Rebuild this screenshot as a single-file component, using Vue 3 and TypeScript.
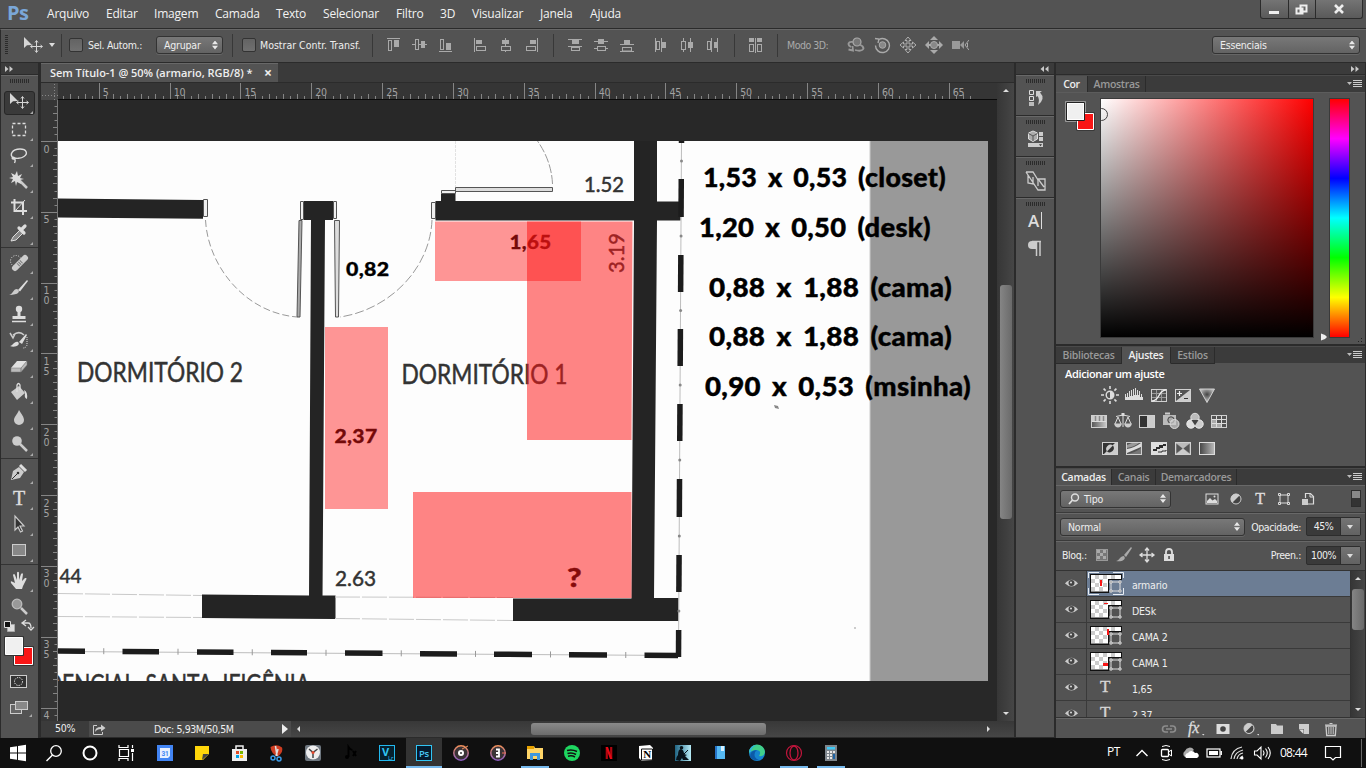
<script setup lang="ts">
interface Menu { label: string; w: number }
interface Note { t: string; x: number; y: number; w: number }
interface Layer { name: string; kind: 'shape' | 'text'; rect?: number[]; active?: boolean }

const menus: Menu[] = [
  { label: 'Arquivo', w: 59 }, { label: 'Editar', w: 48 }, { label: 'Imagem', w: 61 }, { label: 'Camada', w: 61 },
  { label: 'Texto', w: 47 }, { label: 'Selecionar', w: 73 }, { label: 'Filtro', w: 44 }, { label: '3D', w: 32 },
  { label: 'Visualizar', w: 68 }, { label: 'Janela', w: 50 }, { label: 'Ajuda', w: 50 },
]

/* 18x18 align / distribute / 3D icons of the options bar */
const bar: Record<string, string> = {
  alTop: '<path d="M2 2.500h13" stroke="#aaa"/><rect x="3.500" y="4.500" width="3" height="10" fill="none" stroke="#aaa"/><rect x="9" y="4" width="5" height="7" fill="#aaa"/>',
  alMid: '<path d="M1 8.500h15" stroke="#aaa"/><rect x="4.500" y="3.500" width="3" height="10" fill="#535353" stroke="#aaa"/><rect x="10" y="5" width="4" height="7" fill="#aaa"/>',
  alBot: '<path d="M2 15.500h13" stroke="#aaa"/><rect x="3.500" y="3.500" width="3" height="10" fill="none" stroke="#aaa"/><rect x="9" y="7" width="5" height="7" fill="#aaa"/>',
  alL: '<path d="M3.500 2v14" stroke="#aaa"/><rect x="5" y="4" width="6" height="4" fill="#aaa"/><rect x="5.500" y="10.500" width="9" height="4" fill="none" stroke="#aaa"/>',
  alC: '<path d="M8.500 2v14" stroke="#aaa"/><rect x="5" y="4" width="7" height="4" fill="#aaa"/><rect x="4.500" y="10.500" width="9" height="4" fill="#535353" stroke="#aaa"/>',
  alR: '<path d="M14.500 2v14" stroke="#aaa"/><rect x="7" y="4" width="6" height="4" fill="#aaa"/><rect x="3.500" y="10.500" width="9" height="4" fill="none" stroke="#aaa"/>',
  dTop: '<path d="M2 3.500h14M2 10.500h14" stroke="#aaa"/><rect x="6" y="4" width="7" height="4" fill="#aaa"/><rect x="5.500" y="11.500" width="8" height="3" fill="#535353" stroke="#aaa"/>',
  dMid: '<path d="M2 5.500h14M2 12.500h14" stroke="#aaa"/><rect x="6" y="3" width="6" height="5" fill="#aaa"/><rect x="5.500" y="10.500" width="8" height="4" fill="#535353" stroke="#aaa"/>',
  dBot: '<path d="M2 8.500h14M2 15.500h14" stroke="#aaa"/><rect x="6" y="4" width="6" height="4" fill="#aaa"/><rect x="4.500" y="11.500" width="9" height="3.500" fill="#535353" stroke="#aaa"/>',
  dL: '<path d="M3.500 2v14M9.500 2v14" stroke="#aaa"/><rect x="4.500" y="5.500" width="3" height="8" fill="none" stroke="#aaa"/><rect x="10" y="6" width="4" height="6" fill="#aaa"/>',
  dC: '<path d="M5.500 2v14M12.500 2v14" stroke="#aaa"/><rect x="3.500" y="5.500" width="4" height="8" fill="#535353" stroke="#aaa"/><rect x="10" y="6" width="5" height="6" fill="#aaa"/>',
  dR: '<path d="M7.500 2v14M13.500 2v14" stroke="#aaa"/><rect x="3.500" y="5.500" width="3" height="8" fill="none" stroke="#aaa"/><rect x="10" y="6" width="4" height="6" fill="#aaa"/>',
  auto: '<path d="M8.500 2v15" stroke="#aaa"/><rect x="2" y="2" width="5" height="4" fill="#aaa"/><rect x="10" y="2" width="5" height="4" fill="#aaa"/><rect x="2.500" y="8.500" width="4" height="7" fill="none" stroke="#aaa"/><rect x="10.500" y="8.500" width="4" height="7" fill="none" stroke="#aaa"/>',
  orbit: '<circle cx="10" cy="6" r="4" fill="#777" stroke="#aaa" stroke-width="1.200"/><path d="M6 6C1 5 0 9 4 11M1.500 13.500l4.500 1-.5-4.500M8 14q7 2 8.500-1.500 0-2.500-4-4" fill="none" stroke="#999" stroke-width="1.800"/>',
  roll: '<circle cx="9.500" cy="9" r="3.300" fill="#888" stroke="#aaa"/><path d="M6 3.500a7 7 0 1 1-3.500 6M2 2.500l4 .5-1 4" fill="none" stroke="#aaa" stroke-width="1.400"/>',
  pan: '<path d="M9 1l3 3.500h-2v3.500h3.500V6L17 9l-3.500 3v-2H10v3.500h2L9 17l-3-3.500h2V10H4.500v2L1 9l3.500-3v2H8V4.500H6z" fill="#535353" stroke="#b0b0b0"/>',
  slide: '<path d="M9 0l4 4H5zM9 18l4-4H5zM0 9l4-4v8zM18 9l-4-4v8z" fill="#aaa"/><circle cx="9" cy="9" r="3.500" fill="#888" stroke="#aaa"/><path d="M2 9h4M12 9h4" stroke="#aaa" stroke-width="2"/>',
  cam: '<rect x="1" y="5" width="8" height="8" fill="#999"/><path d="M9 9l4-4v8z" fill="#999"/><path d="M18 4l-4 5 4 5M16.500 7v4" fill="none" stroke="#aaa"/>',
}
const alignGroups: string[][] = [['alTop', 'alMid', 'alBot'], ['alL', 'alC', 'alR']]
const distGroups: string[][] = [['dTop', 'dMid', 'dBot'], ['dL', 'dC', 'dR']]
const modes3d = ['orbit', 'roll', 'pan', 'slide', 'cam']

/* 24x24 tool icons */
const moveGlyph = '<path d="M1 4v11l3-2.800 5-.2z" fill="#d6d6d6"/><path d="M13.500 8v11M8 13.500h11M12 9.500l1.500-2 1.500 2M12 17.500l1.500 2 1.500-2M9.500 12l-2 1.500 2 1.500M17.500 12l2 1.500-2 1.500" fill="none" stroke="#d6d6d6"/>'
const tools: Record<string, string> = {
  move: '<g transform="translate(2 -1)">' + moveGlyph + '</g>',
  marquee: '<rect x="5.500" y="6.500" width="13" height="12" fill="none" stroke="#ddd" stroke-width="1.300" stroke-dasharray="3 2"/>',
  lasso: '<path d="M6.500 15C2 12 5 6 13 6c7 0 8 5 4 7.500-3 2-8 2.500-10 1-2-1-2.500 2-.5 1.500s2 2 1 4" fill="none" stroke="#ddd" stroke-width="1.400"/>',
  wand: '<path d="M12 11l8 8" stroke="#ccc" stroke-width="2.500"/><path d="M10 2l1 5 4-2-2 4 4 1-4 1 1 4-4-2-1 4-1-5-4 2 2-4-4-1 4-1-2-4 4 2z" fill="#ddd"/>',
  crop: '<path d="M7.500 4v12H20M4 7.500h12V20" fill="none" stroke="#ddd" stroke-width="2"/><path d="M9 15l9-10" stroke="#ddd"/>',
  dropper: '<path d="M4 20l2-4 7-7 3 3-7 7z" fill="#888" stroke="#ddd"/><path d="M12 7l5 5M14 9l4-4" stroke="#ddd" stroke-width="3.200" stroke-linecap="round"/>',
  heal: '<circle cx="9" cy="11" r="5.500" fill="none" stroke="#ddd" stroke-dasharray="1 1.500"/><path d="M8 18l10-10" stroke="#ccc" stroke-width="6" stroke-linecap="round"/><path d="M11 15l4-4" stroke="#777" stroke-width="4" stroke-dasharray="1 1"/>',
  brush: '<path d="M11 14l9-10 1 1-8 10.500z" fill="#ddd"/><path d="M2 19c4-1 4-6 8-6 4 2 2 6-8 6z" fill="#ccc"/>',
  stamp: '<circle cx="12" cy="7" r="3.200" fill="#ddd"/><path d="M10.500 9h3v5h5v3h-13v-3h5z" fill="#ddd"/><path d="M5 19.500h14" stroke="#ddd" stroke-width="1.500"/>',
  history: '<path d="M3 5l3 5 2-4M6 7c4-3 8-3 11 0" fill="none" stroke="#ccc" stroke-width="1.500"/><path d="M12 14l7-8 1 1-5 9zM3 18c3 0 4-5 8-4 3 3-3 6-8 4z" fill="#ddd"/><path d="M20 9v8q-1 3-4 3" fill="none" stroke="#ddd" stroke-dasharray="1 1"/>',
  eraser: '<path d="M4 14l6-7h10l-6 7z" fill="#e2e2e2"/><path d="M4 14h10v4H4zM14 14l6-7v4l-6 7z" fill="#bbb" stroke="#777" stroke-width=".5"/>',
  bucket: '<path d="M4 12l8-6 6 7-8 7z" fill="#ccc"/><path d="M10 12V5q1.500-3 3 0v5" fill="none" stroke="#ddd" stroke-width="1.300"/><path d="M17 10q4 2 3 9-3-1-2-5z" fill="#ddd"/>',
  blur: '<path d="M12 4c3 5 5 7 5 10a5 5 0 0 1-10 0c0-3 3-5 5-10z" fill="#ccc"/>',
  dodge: '<circle cx="10" cy="9" r="4.800" fill="#ccc"/><path d="M13 12l7 7" stroke="#ccc" stroke-width="2.500"/>',
  pen: '<path d="M4 20l2-9 6-4 5 5-4 6z" fill="#ccc"/><path d="M5 19l5-5" stroke="#333"/><circle cx="11" cy="13" r="1.300" fill="#333"/><path d="M13 5l6 6" stroke="#ddd" stroke-width="3"/>',
  type: '<text x="12" y="18.500" text-anchor="middle" font-family="Liberation Serif, serif" font-size="20" font-weight="400" fill="#ddd" stroke="#ddd" stroke-width=".4">T</text>',
  path: '<path d="M8 4v14l3-3 2.500 5 2-1-2.500-5h4z" fill="#333" stroke="#ccc" stroke-width="1.200"/>',
  rect: '<rect x="5.500" y="6.500" width="13" height="11" fill="#888" stroke="#ccc"/>',
  hand: '<path d="M9 21L4 15q-1-3 2-1l2 1-2-8q1-2 2 0l2 5V4.500q1-1.500 2 0V12l2-6q1.500-1.500 2 0l-1 7 3-3q2-.5 1.500 1L16 18l-1 3z" fill="#ddd"/>',
  zoom: '<circle cx="10" cy="10" r="4.800" fill="#999" stroke="#bbb" stroke-width="1.300"/><path d="M14 14l6 6" stroke="#ccc" stroke-width="2.500"/>',
}
const toolGroups: string[][] = [
  ['move', 'marquee', 'lasso', 'wand', 'crop', 'dropper'],
  ['heal', 'brush', 'stamp', 'history', 'eraser', 'bucket', 'blur', 'dodge'],
  ['pen', 'type', 'path', 'rect'],
  ['hand', 'zoom'],
]

/* 18x18 dock + panel icons */
const frame = '<rect x="1.500" y="3.500" width="15" height="12" fill="none" stroke="#d0d0d0"/>'
const ico: Record<string, string> = {
  bright: '<circle cx="9" cy="9" r="3.800" fill="none" stroke="#ddd" stroke-width="1.400"/><path d="M9 5.500a3.500 3.500 0 0 1 0 7z" fill="#ddd"/><path d="M9 0v3M9 15v3M0 9h3M15 9h3M2.600 2.600l2 2M13.400 13.400l2 2M2.600 15.400l2-2M13.400 4.600l2-2" stroke="#ddd" stroke-width="1.600"/>',
  levels: '<path d="M0 14V8h1v3h1V7h1v4h1V5h1v5h1V4h1v6h1V3h1v6h1V2h1v7h1V4h1v5h1V5h1v6h1V8h1v3h1v3z" fill="#ddd"/>',
  curves: frame + '<path d="M2 7.500h14M2 11.500h14M6.500 4v11M11.500 4v11" stroke="#999"/><path d="M2 15c8 0 6-11 14-11" fill="none" stroke="#eee" stroke-width="1.400"/>',
  expo: frame + '<path d="M2 15L16 4v11z" fill="#ccc"/><path d="M3 7.500h5M5.500 5v5" stroke="#eee" stroke-width="1.200"/><path d="M10 12.500h4" stroke="#333"/>',
  vib: '<path d="M1.500 3h15L9 16.500z" fill="url(#vg)" stroke="#d0d0d0"/><defs><radialGradient id="vg" cx=".5" cy=".4"><stop offset="0" stop-color="#444"/><stop offset="1" stop-color="#bbb"/></radialGradient></defs>',
  hue: '<rect x="1.500" y="3.500" width="15" height="12" fill="url(#hg)" stroke="#d0d0d0"/><defs><linearGradient id="hg"><stop offset="0" stop-color="#555"/><stop offset="1" stop-color="#ccc"/></linearGradient></defs><rect x="2" y="4" width="14" height="5" fill="#ccc"/><path d="M5.500 4v5M9.500 4v5M13.500 4v5" stroke="#888" stroke-width="1.500"/><path d="M2 9.500h14" stroke="#ddd"/>',
  balance: '<path d="M9 2v13M2 4.500q7-3 14 0M4 5l-3 7M4 5l3 7M14 5l-3 7M14 5l3 7" fill="none" stroke="#ddd"/><path d="M0 11.500h8q-1 4-4 4t-4-4M10 11.500h8q-1 4-4 4t-4-4" fill="#ccc"/><rect x="7.500" y="1" width="3" height="3" fill="#ddd"/>',
  bw: frame + '<rect x="2" y="4" width="7" height="11" fill="#333"/><rect x="9" y="4" width="7" height="11" fill="#ccc"/>',
  photo: '<rect x="1" y="3" width="13" height="10" fill="#bbb"/><path d="M3 1.500h5" stroke="#ccc" stroke-width="2"/><circle cx="9" cy="8" r="3.200" fill="#aaa" stroke="#444"/><circle cx="12.500" cy="12" r="4.500" fill="#ccc" fill-opacity=".7" stroke="#ddd"/>',
  mixer: '<circle cx="9" cy="5.500" r="4.200" fill="#bbb" stroke="#ddd"/><circle cx="5" cy="12" r="4.200" fill="#ddd" stroke="#eee"/><circle cx="13" cy="12" r="4.200" fill="#ccc" stroke="#eee"/><path d="M9 13.500L5.500 8h7z" fill="#444"/>',
  lut: frame + '<path d="M2 7.500h14M2 11.500h14M6.500 4v11M11.500 4v11" stroke="#ddd"/><path d="M2 8h4v3H2zM2 12h4v3H2zM7 12h4v3H7z" fill="#aaa"/>',
  invert: frame + '<path d="M2 4h12L3 15H2z" fill="#333"/><path d="M14 4h2v11H3z" fill="#ccc"/><path d="M6 12.500a4.300 4.300 0 0 1 6-6z" fill="#ccc"/><path d="M12 6.500a4.300 4.300 0 0 1-6 6z" fill="#333"/>',
  poster: frame + '<path d="M2 10q7-1 14-6v4Q9 11 2 14z" fill="#ddd"/><path d="M2 6l5-2h7Q9 8 2 9z" fill="#999"/><path d="M2 15q8-1 14-6v6z" fill="#777"/>',
  thresh: '<rect x="1.500" y="3.500" width="15" height="12" fill="#ddd" stroke="#ddd"/><path d="M3 10h3V8h3V6h4V5h3v2h-3v2h-3v1H7v2H3z" fill="#2c2c2c"/><path d="M8 13h4v-1h4v-1" fill="none" stroke="#2c2c2c"/>',
  selcol: frame + '<path d="M2 4h14L9 9.500z" fill="#bbb"/><path d="M2 15h14L9 9.500z" fill="#ccc"/><path d="M2 4v11l7-5.500zM16 4v11L9 9.500z" fill="#555" stroke="#ddd" stroke-width=".5"/>',
  gmap: '<rect x="1.500" y="3.500" width="15" height="12" fill="url(#gm)" stroke="#ddd"/><defs><linearGradient id="gm"><stop offset="0" stop-color="#444"/><stop offset="1" stop-color="#bbb"/></linearGradient></defs>',
  fImg: '<rect x="3" y="4" width="12" height="10" fill="#555" stroke="#ddd"/><path d="M4 13V11l3-3 2.500 2.500L12 9l2 2v2z" fill="#ddd"/><circle cx="11.500" cy="6.500" r="1" fill="#ddd"/>',
  fAdj: '<circle cx="9" cy="9" r="5.300" fill="#ccc"/><path d="M5 13L13 5A5.500 5.500 0 0 1 5 13z" fill="#444"/><circle cx="9" cy="9" r="5" fill="none" stroke="#ccc"/>',
  fText: '<text x="9" y="14" text-anchor="middle" font-family="Liberation Serif, serif" font-size="16" fill="#ddd" stroke="#ddd" stroke-width=".4">T</text>',
  fShape: '<rect x="5" y="5" width="8" height="8" fill="none" stroke="#ddd"/><path d="M3.500 3.500h2v2h-2zM12.500 3.500h2v2h-2zM3.500 12.500h2v2h-2zM12.500 12.500h2v2h-2z" fill="#555" stroke="#ddd"/>',
  fSmart: '<path d="M6.500 8V3.500h5l3 3V14H9" fill="none" stroke="#ddd" stroke-width="1.200"/><path d="M11 4v3h3" fill="none" stroke="#ddd"/><rect x="3" y="9" width="6" height="6" fill="#ccc"/>',
  lPix: '<rect x="3.500" y="3.500" width="11" height="11" fill="#777" stroke="#999"/><path d="M4 4h3v3H4zM10 4h3v3h-3zM7 7h3v3H7zM4 10h3v3H4zM10 10h3v3h-3z" fill="#aaa"/>',
  lBrush: '<path d="M9 9l7-8 1 1-6 9z" fill="#aaa"/><path d="M1 15c3 0 4-5 8-5 3 4-3 6-8 5z" fill="#aaa"/>',
  lMove: '<path d="M9 2.500v13M2.500 9h13M7 4.500L9 2l2 2.500M7 13.500L9 16l2-2.500M4.500 7L2 9l2.500 2M13.500 7L16 9l-2.500 2" fill="none" stroke="#ddd" stroke-width="1.300"/>',
  lock: '<rect x="4" y="8" width="10" height="7" fill="#ddd"/><path d="M6 8V6a3 3 0 0 1 6 0v2" fill="none" stroke="#ddd" stroke-width="1.800"/><rect x="8.300" y="10" width="1.500" height="3" fill="#444"/>',
  link: '<path d="M8 6H5.500a3 3 0 0 0 0 6H8M10 6h2.500a3 3 0 0 1 0 6H10M6 9h6" fill="none" stroke="#8d8d8d" stroke-width="1.600"/>',
  fx: '<text x="1" y="13" font-family="Liberation Serif, serif" font-style="italic" font-size="16" fill="#ddd" stroke="#ddd" stroke-width=".3">fx</text><path d="M15 14h2.500l-1.200 1.500z" fill="#ddd"/>',
  mask: '<rect x="2.500" y="4" width="13" height="10" fill="#ddd"/><circle cx="9" cy="9" r="2.800" fill="#444"/>',
  adj: '<circle cx="8" cy="8.500" r="5" fill="#ccc"/><path d="M4.500 12L11.500 5A5 5 0 0 1 4.500 12z" fill="#444"/><circle cx="8" cy="8.500" r="5" fill="none" stroke="#ccc"/><path d="M16 14h2.500l-1.200 1.500z" fill="#ddd"/>',
  folder: '<path d="M3 14V4h5l1 1.500h6V14z" fill="#ccc"/>',
  newl: '<path d="M4 4h10v10H9V9H4z" fill="#ccc"/><path d="M4 9.500h4.500V14z" fill="#ddd"/>',
  trash: '<path d="M4 6h10l-.7 9.500H4.700z" fill="none" stroke="#ccc" stroke-width="1.300"/><path d="M3 5h12M7.500 3.500h3M6.800 7v7M9 7v7M11.200 7v7" stroke="#ccc"/>',
}
const adjRows: string[][] = [
  ['bright', 'levels', 'curves', 'expo', 'vib'],
  ['hue', 'balance', 'bw', 'photo', 'mixer', 'lut'],
  ['invert', 'poster', 'thresh', 'selcol', 'gmap'],
]
const filters = ['fImg', 'fAdj', 'fText', 'fShape', 'fSmart']
const locks = ['lPix', 'lBrush', 'lMove', 'lock']
const footer = ['link', 'fx', 'mask', 'adj', 'folder', 'newl', 'trash']
const dock: string[][] = [
  ['<path d="M5.500 1.500h4v4h-4zM5.500 7.500h4v4h-4z" fill="none" stroke="#ddd"/><rect x="5" y="13" width="5" height="4" fill="#bbb"/><path d="M12 2h6l-2 1.500q6 6-2 12.500 2-6-.5-9l-1.500 1z" fill="#ccc"/>'],
  ['<path d="M9 1l4.500 2v6L9 11.500 4.500 9V3z" fill="#aaa" stroke="#ddd"/><path d="M4.500 3.500L9 6l4.500-2.500M9 6v5" fill="none" stroke="#555"/><path d="M15 2h4v4h-4zM15 7h4v4h-4z" fill="#ccc"/><rect x="4" y="13" width="15" height="4" fill="#ccc"/><path d="M15 14.300h3l-1.500 2z" fill="#333"/>'],
  ['<path d="M2 1h7l5 8M2 1l12 18h7V8h-7l6 8M4 4v8l5 1V6" fill="none" stroke="#ccc" stroke-width="1.300"/><path d="M14 8v7" stroke="#ccc" stroke-width="1.300"/>'],
  [
    '<text x="4" y="15" font-family="Open Sans, sans-serif" font-size="17" font-weight="600" fill="#ddd">A</text><path d="M17.500 0v17" stroke="#ddd"/>',
    '<path d="M12.500 2v15M16 2v15M8 2.500h9" stroke="#ccc" stroke-width="1.500"/><path d="M12.500 2H8a4 4 0 0 0 0 8h4.500z" fill="#ccc"/>',
  ],
]

const layers: Layer[] = [
  { name: 'armario', kind: 'shape', rect: [10, 7, 2, 6], active: true },
  { name: 'DESk', kind: 'shape', rect: [14, 4, 4, 1] },
  { name: 'CAMA 2', kind: 'shape', rect: [17, 4, 2, 6] },
  { name: 'CAMA 1', kind: 'shape', rect: [13, 12, 5, 3] },
  { name: '1,65', kind: 'text' },
  { name: '2,37', kind: 'text' },
]

const hTicks = Array.from({ length: 134 }, (_, i) => ({ x: 28.5 + i * 7.083 - 58, n: i, big: i % 10 === 0, v: i / 2 })).filter((t) => t.x > 0 && t.x < 938)
const vTicks = Array.from({ length: 88 }, (_, i) => ({ y: 141.5 - 5 * 7.083 + i * 7.083, n: i - 5 })).filter((t) => t.y > 100 && t.y < 720)
const digits = (n: number): string[] => (n === 80 ? ['4'] : String(n / 2).split(''))

const notes: Note[] = [
  { t: '1,53 x 0,53 (closet)', x: 703, y: 187, w: 243 },
  { t: '1,20 x 0,50 (desk)', x: 699, y: 237, w: 232 },
  { t: '0,88 x 1,88 (cama)', x: 709, y: 297, w: 243 },
  { t: '0,88 x 1,88 (cama)', x: 709, y: 346, w: 243 },
  { t: '0,90 x 0,53 (msinha)', x: 705, y: 396, w: 266 },
]
const sideDashes: number[][] = [[141, 143], [179, 217], [255, 292], [329, 366], [404, 441], [479, 517], [555, 592], [630, 657]]
const footDashes: number[][] = [[58, 85], [122.5, 159], [197, 233.5], [271, 307], [345, 382.5], [420, 457], [494, 532], [569, 607], [644.5, 678]]
const sideX = (y: number): number => 681.5 - ((y - 141) / 516) * 3
const footY = (x: number): number => 651 + ((x - 58) / 620) * 4.5

/* 18x18 taskbar icons */
const disc = (inner: string): string => '<circle cx="9" cy="9" r="7.200" fill="#3a3336" stroke="url(#dg)" stroke-width="1.500"/><defs><linearGradient id="dg" x1="0" y1="0" x2="0" y2="1"><stop offset="0" stop-color="#f0905a"/><stop offset="1" stop-color="#8a5bc0"/></linearGradient></defs>' + inner
const sys: string[] = [
  '<path d="M1 3.200l7-1v6.300H1zM9 2l8-1.200v7.700H9zM1 9.500h7v6.300l-7-1zM9 9.500h8v7.700L9 16z" fill="#fff"/>',
  '<circle cx="11" cy="7" r="5.300" fill="none" stroke="#fff" stroke-width="1.300"/><path d="M7.500 11L1.500 17" stroke="#fff" stroke-width="1.500"/>',
  '<circle cx="9" cy="9" r="6.500" fill="none" stroke="#fff" stroke-width="2"/>',
  '<path d="M2 1v2.500h9V1M2 17v-2.500h9V17M2.500 5.500h9v7h-9zM15.500 1v3M15.500 9v8" fill="none" stroke="#fff" stroke-width="1.200"/><path d="M14 5h3v3h-3z" fill="#fff"/>',
]
const apps: { g: string; on?: boolean; active?: boolean }[] = [
  { g: '<rect x="1" y="1" width="16" height="16" fill="#4285f4"/><path d="M4 4h10v8l-2 2H4z" fill="#e8f0fe"/><text x="9" y="11.500" text-anchor="middle" font-family="Roboto, sans-serif" font-size="6.500" font-weight="700" fill="#4285f4">31</text>' },
  { g: '<path d="M2 2h14v8l-6 6H2z" fill="#ffd60a"/><path d="M9 16l1-6h6z" fill="#454545"/>' },
  { g: '<path d="M6 5V2h7v3" fill="none" stroke="#eee" stroke-width="1.500"/><path d="M2 5h15v12H2z" fill="#eee"/><path d="M6 7h3v3H6z" fill="#e34c26"/><path d="M10 7h3v3h-3z" fill="#7ab800"/><path d="M6 11h3v3H6z" fill="#00a2e8"/><path d="M10 11h3v3h-3z" fill="#fbb900"/>' },
  { g: '<path d="M3.500 3q6-3.500 11.500.5 1.500 5-4.500 9-6.500-3-7-9.500z" fill="#cf3d21"/><path d="M8.500 2l1.500 10M11 5l-2 7" stroke="#ddd" stroke-width="1.600"/><circle cx="6" cy="14" r="2" fill="none" stroke="#3b9be8" stroke-width="1.500"/><circle cx="12" cy="15" r="2" fill="none" stroke="#3b9be8" stroke-width="1.500"/>' },
  { g: '<rect x="1" y="1" width="16" height="16" rx="2" fill="#6e7780"/><circle cx="9" cy="8.500" r="7" fill="#eee"/><path d="M5 5l4 3.500L13.500 5M9 9v5" fill="none" stroke="#444" stroke-width="1.500"/><circle cx="9" cy="8.500" r="1.500" fill="#e64a2e"/>' },
  { g: '<circle cx="6" cy="13" r="2" fill="#000"/><path d="M7.500 13V3q2 3 4 3M12 7l3 5M15 7l-3 5" fill="none" stroke="#000" stroke-width="2"/>' },
  { g: '<rect x="1.500" y="1.500" width="15" height="15" fill="#06202e" stroke="#22b8ee"/><text x="4" y="12" font-family="Open Sans, sans-serif" font-size="11" font-weight="700" fill="#31c5f4">V</text><text x="10" y="15.500" font-family="Open Sans, sans-serif" font-size="6" fill="#31c5f4">Lr</text>' },
  { g: '<rect x="1.500" y="1.500" width="15" height="15" fill="#051a2d" stroke="#31c5f4"/><text x="9" y="12.500" text-anchor="middle" font-family="Open Sans, sans-serif" font-size="9.500" font-weight="600" fill="#48c8f5">Ps</text>', active: true, on: true },
  { g: disc('<circle cx="9" cy="9" r="3" fill="#fff"/><circle cx="9" cy="9" r="1" fill="#333"/><path d="M10 5l6-3" stroke="#f0905a"/>') },
  { g: disc('<path d="M7 5.500h3v7H7M7 9h3" fill="none" stroke="#fff" stroke-width="1.800"/><path d="M13 9h4" stroke="#f0705a"/>') },
  { g: '<path d="M1 2h7l1 2h8v11H1z" fill="#ffd567"/><path d="M1 2h7v3H1z" fill="#e6a100"/><path d="M4 9h10v7h-3v-4H7v4H4z" fill="#3f97dd"/>', on: true },
  { g: '<circle cx="9" cy="9" r="8" fill="#1ed760"/><path d="M4 6.500q5-1.500 10 1M4.500 9.500q4.500-1.500 8.500 1M5 12.200q4-1 7 .8" fill="none" stroke="#111" stroke-width="1.500"/>' },
  { g: '<rect x="1" y="1" width="16" height="16" fill="#000"/><path d="M6.800 3v12M11.200 3v12" stroke="#b1060f" stroke-width="2.200"/><path d="M5.700 3h2.300l4.300 12H10z" fill="#e50914"/>' },
  { g: '<path d="M2 2l11-1 3 3v12l-11 1-3-3z" fill="#fff"/><path d="M4.500 5h11v11h-11z" fill="#fff" stroke="#111"/><text x="10" y="14.300" text-anchor="middle" font-family="Liberation Serif, serif" font-weight="700" font-size="11" fill="#000">N</text>' },
  { g: '<rect x="1" y="1" width="16" height="16" fill="url(#kg)"/><defs><linearGradient id="kg"><stop offset="0" stop-color="#1f6483"/><stop offset="1" stop-color="#b7ecf7"/></linearGradient></defs><circle cx="7.500" cy="3.800" r="1.800" fill="#06121a"/><path d="M2 16q0-3 2-5 0-6 3-6 3 1 3 5l3 1-2 1 4 4H9l-1-2-2 3z" fill="#06121a"/><path d="M10 10l4-4" stroke="#06121a"/>' },
  { g: '<rect x="4" y="2" width="10" height="13" fill="#55b9f3"/><rect x="4" y="2" width="2" height="13" fill="#2673c7"/><path d="M10 2h3v5h-3z" fill="#d7f0ff"/>' },
  { g: '<circle cx="9" cy="9" r="8" fill="#1584cf"/><path d="M1 9a8 8 0 0 1 16-1q-1 5-6 4 3-5-2-6-5 0-8 3z" fill="#41d08a"/><path d="M1 8q1-7 8-7Q3 3 3 8z" fill="#2bb3e0"/><path d="M7 8q-2 6 4 8-6 1-9-3Q2 6 9 6z" fill="#0c5aa8"/>' },
  { g: '<circle cx="9" cy="9" r="7.500" fill="none" stroke="#c3153c" stroke-width="1.200"/><ellipse cx="9" cy="9" rx="4" ry="7" fill="none" stroke="#c3153c" stroke-width="1.300"/>', on: true },
  { g: '<rect x="3" y="1" width="12" height="16" fill="#7d858c"/><rect x="5" y="3" width="8" height="2.500" fill="#3fc8f5"/><path d="M5 7h2v2H5zM8 7h2v2H8zM11 7h2v2h-2zM5 10h2v2H5zM8 10h2v2H8zM5 13h2v2H5zM8 13h2v2H8z" fill="#e8e8e8"/><path d="M11 10h2v5h-2z" fill="#1d63a5"/>', on: true },
]
const tray: string[] = [
  '<path d="M3.500 12L9 6.500l5.500 5.500" fill="none" stroke="#fff" stroke-width="1.400"/>',
  '<rect x="4.500" y="5.500" width="7" height="7" rx="1" fill="none" stroke="#fff" stroke-width="1.300"/><path d="M11.500 8l3-2v6l-3-2M5 2.500q4-2 8 0M5 15.500q4 2 8 0" fill="none" stroke="#fff"/>',
  '<path d="M4 13a3.500 3.500 0 0 1 0-6 5 5 0 0 1 9-1z" fill="#aaa"/><path d="M5 14a3 3 0 0 1 2-5 4 4 0 0 1 7 0 2.600 2.600 0 0 1 2 5z" fill="#fff"/>',
  '<rect x="2" y="5" width="13" height="8" fill="none" stroke="#fff" stroke-width="1.200"/><rect x="4" y="7" width="9" height="4" fill="#fff"/><path d="M16.200 7v4" stroke="#fff" stroke-width="1.500"/>',
  '<path d="M2 15Q3 5 13 3M5 15q1-7 9-9M8 15q1-5 6-6M11 15q0-2 3-3" fill="none" stroke="#ddd" stroke-width="1.200"/><circle cx="13" cy="14" r="1.500" fill="#fff"/>',
  '<path d="M1.500 7h2.500l4-4v12l-4-4H1.500zM10 6.500q2 2.500 0 5M12.500 4.500q3.500 4.500 0 9M15 3q4.500 6 0 12" fill="none" stroke="#fff" stroke-width="1.100"/>',
]
</script>

<template>
  <div class="app">
    <header class="menubar">
      <span class="logo">Ps</span>
      <nav class="menus">
        <span v-for="m in menus" :key="m.label" :style="{ width: m.w + 'px' }">{{ m.label }}</span>
      </nav>
      <div class="win">
        <span><svg width="27" height="18"><path d="M8 11h10v3H8z" fill="#eee" /></svg></span>
        <span><svg width="26" height="18"><path d="M11.500 5.500h6v6h-6zM7.500 8.500h6v5h-6z" fill="#666" stroke="#eee" stroke-width="2" /></svg></span>
        <span><svg width="46" height="18"><path d="M19 5l8 8M27 5l-8 8" stroke="#eee" stroke-width="2.600" /></svg></span>
      </div>
    </header>

    <div class="options">
      <i class="vgrip"></i>
      <svg class="mv" width="21" height="22" viewBox="0 0 21 22" v-html="moveGlyph"></svg>
      <i class="caret"></i>
      <i class="sep s1"></i>
      <i class="check"></i><span class="ol sel">Sel. Autom.:</span>
      <div class="select agr"><span>Agrupar</span><i class="updn"></i></div>
      <i class="sep s2"></i>
      <i class="check"></i><span class="ol most">Mostrar Contr. Transf.</span>
      <i class="sep s3"></i>
      <div v-for="(g, i) in alignGroups" :key="'a' + i" class="grp">
        <svg v-for="k in g" :key="k" width="18" height="18" v-html="bar[k]"></svg>
      </div>
      <i class="sep"></i>
      <div v-for="(g, i) in distGroups" :key="'d' + i" class="grp">
        <svg v-for="k in g" :key="k" width="18" height="18" v-html="bar[k]"></svg>
      </div>
      <i class="sep"></i>
      <div class="grp"><svg width="18" height="18" v-html="bar.auto"></svg></div>
      <i class="sep"></i>
      <span class="ol modo">Modo 3D:</span>
      <div class="grp m3"><svg v-for="k in modes3d" :key="k" width="18" height="18" v-html="bar[k]"></svg></div>
      <div class="select ess"><span>Essenciais</span><i class="updn"></i></div>
    </div>

    <main class="main">
      <aside class="toolcol">
        <div class="strip"><svg width="10" height="6"><path d="M0 0l3.500 3L0 6zM4.500 0L8 3 4.500 6z" fill="#c8c8c8" /></svg></div>
        <div class="tools">
          <i class="hgrip"></i>
          <div v-for="(g, gi) in toolGroups" :key="gi" class="tgrp">
            <div v-for="k in g" :key="k" class="tool" :class="{ on: k === 'move' }">
              <svg width="24" height="24" v-html="tools[k]"></svg>
              <i v-if="k !== 'zoom'" class="corner"></i>
            </div>
          </div>
          <svg class="swatches" width="36" height="100" viewBox="0 0 36 100">
            <path d="M6.500 6.500h7v7h-7z" fill="#ddd" stroke="#aaa" /><path d="M3.500 3.500h6v6h-6z" fill="#111" stroke="#ddd" />
            <path d="M22 5h5q3 0 3 5M25 2l-4 3 4 3M27 9l3 3 3-3" fill="none" stroke="#ddd" stroke-width="1.300" />
            <path d="M13.500 29.500h18v17h-18z" fill="#f91616" stroke="#fff" /><path d="M12.500 28.500h20v19h-20z" fill="none" stroke="#333" />
            <path d="M4.500 19.500h17v17h-17z" fill="#f0f0f0" stroke="#fff" /><path d="M3.500 18.500h19v19h-19z" fill="none" stroke="#333" />
            <rect x="9.500" y="57.500" width="16" height="12" fill="#333" stroke="#ccc" /><circle cx="17.500" cy="63.500" r="4" fill="#333" stroke="#fff" stroke-dasharray="1.200 1.200" />
            <rect x="9.500" y="86.500" width="11" height="9" fill="#666" stroke="#ccc" /><rect x="14.500" y="83.500" width="12" height="8" fill="#888" stroke="#ccc" /><path d="M28 99l3-3v3z" fill="#aaa" />
          </svg>
        </div>
      </aside>

      <section class="doc">
        <div class="tabs"><div class="tab"><span>Sem Título-1 @ 50% (armario, RGB/8) *</span><b>×</b></div></div>
        <div class="stage">
          <svg class="corner-r" width="17" height="17"><rect width="17" height="17" fill="#4a4a4a" /><path d="M1 12.500h16M13.500 1v16" stroke="#888" stroke-dasharray="1 2" /></svg>
          <svg class="hr" width="939" height="17">
            <rect width="939" height="17" fill="#353535" />
            <g v-for="t in hTicks" :key="t.n">
              <path :d="`M${Math.floor(t.x) + 0.5} ${t.big ? 0 : t.n % 2 ? 13 : 11}V16`" stroke="#858585" />
              <text v-if="t.big" :x="t.x + 3.5" y="13" class="rt">{{ t.v }}</text>
            </g>
            <path d="M0 16.500h939" stroke="#0a0a0a" />
          </svg>
          <svg class="vr" width="17" height="621" viewBox="41 100 17 621">
            <rect x="41" y="100" width="17" height="621" fill="#353535" />
            <g v-for="t in vTicks" :key="t.n">
              <path :d="`M${t.n % 10 === 0 ? 41 : t.n % 2 ? 54.5 : 53} ${Math.floor(t.y) + 0.5}H57.500`" stroke="#858585" />
              <template v-if="t.n % 10 === 0">
                <text v-for="(d, i) in digits(t.n)" :key="i" x="43.500" :y="t.y + 11 + i * 10" class="rt">{{ d }}</text>
              </template>
            </g>
            <path d="M57.500 100v621" stroke="#777" />
          </svg>
          <svg class="canvas" width="939" height="621" viewBox="58 100 939 621">
            <defs>
              <clipPath id="paper"><rect x="58" y="141" width="930" height="540" /></clipPath>
              <linearGradient id="edge"><stop offset="0" stop-color="#fdfdfd" /><stop offset="1" stop-color="#999" /></linearGradient>
            </defs>
            <rect x="58" y="100" width="939" height="621" fill="#282828" />
            <g clip-path="url(#paper)">
              <rect x="58" y="141" width="930" height="540" fill="#999" />
              <rect x="58" y="141" width="811" height="540" fill="#fdfdfd" />
              <rect x="869" y="141" width="2" height="540" fill="url(#edge)" />
              <g fill="#242424">
                <path d="M58 198.500L203 200v18.700L58 217.500z" />
                <path d="M304 201h29v19h-8L322.500 600H309L311 220h-7z" />
                <path d="M435.500 201H634V141h23V201.500h25.500V217h-2v3.500H657L654 598h24.500v23H513V598.500H631.500L634 220.500H435.500z" />
                <path d="M441 193.500h14.500V203H441z" />
                <path d="M202 594.500l107 1h26.500v23.500L202 618z" />
              </g>
              <g fill="#f0f0f0" stroke="#555">
                <path d="M203.500 199.500h4v17h-4zM300.500 201.500h3v18h-3zM333.500 201.500h3v17h-3zM431.500 202.500h4v16h-4zM441.500 190.500h14v3h-14z" />
                <path d="M455.500 187.500h97v4h-97z" fill="#ddd" />
                <path d="M299 220.500h3l-2 96.500h-3z" fill="#aaa" /><path d="M334.500 220.500h5l-1 96.500h-3z" fill="#ddd" />
              </g>
              <g fill="none" stroke="#999">
                <path d="M205.500 220C208 267 246 313 297 317" stroke-dasharray="7 3" /><path d="M432 220C430 270 388 310 340 317" stroke-dasharray="9 3" />
                <path d="M552.500 184q-1-23-15-43" stroke-dasharray="9 2" /><path d="M455.500 141v46" stroke="#e2e2e2" stroke-dasharray="3 1" />
                <path d="M58 593.500l144 2M58 616.500l144 1M335 597l178 .5M335 618.500l178 2" stroke="#c9c9c9" stroke-dasharray="25 2" />
                <path d="M681.500 141L678.500 655M58 651.500L678 655.500" stroke="#bdbdbd" />
              </g>
              <g stroke="#1c1c1c" stroke-width="5.500">
                <path v-for="(d, i) in sideDashes" :key="'s' + i" :d="`M${sideX(d[0])} ${d[0]}L${sideX(d[1])} ${d[1]}`" />
                <path v-for="(d, i) in footDashes" :key="'f' + i" :d="`M${d[0]} ${footY(d[0])}L${d[1]} ${footY(d[1])}`" />
              </g>
              <g fill="#888">
                <circle v-for="(d, i) in sideDashes.slice(0, 7)" :key="'c' + i" :cx="sideX(d[1])" :cy="(d[1] + sideDashes[i + 1][0]) / 2" r="1.500" />
                <path v-for="(d, i) in footDashes.slice(0, 8)" :key="'e' + i" :d="`M${(d[1] + footDashes[i + 1][0]) / 2} ${footY(d[1]) - 3}v6`" stroke="#999" />
                <path d="M774 405l4 1 1 3-4-1z" /><circle cx="855" cy="628" r="1" fill="#bbb" />
              </g>
              <g class="plan">
                <text x="77" y="381.500" textLength="166" lengthAdjust="spacingAndGlyphs" font-size="27">DORMITÓRIO 2</text>
                <text x="401.500" y="384" textLength="166" lengthAdjust="spacingAndGlyphs" font-size="27">DORMITÓRIO 1</text>
                <text x="584" y="192" textLength="40" lengthAdjust="spacingAndGlyphs" font-size="21">1.52</text>
                <text x="335" y="586" textLength="41" lengthAdjust="spacingAndGlyphs" font-size="21">2.63</text>
                <text x="59.500" y="583" textLength="22" lengthAdjust="spacingAndGlyphs" font-size="20">44</text>
                <text class="street" x="46" y="694" textLength="264" lengthAdjust="spacingAndGlyphs" font-size="26">DENCIAL SANTA IFIGÊNIA</text>
                <text transform="translate(624 273) rotate(-90)" textLength="40" lengthAdjust="spacingAndGlyphs" font-size="22">3.19</text>
              </g>
              <g class="note small">
                <text x="346" y="276" textLength="43.500" lengthAdjust="spacingAndGlyphs">0,82</text>
                <text x="509.500" y="249" textLength="42" lengthAdjust="spacingAndGlyphs">1,65</text>
                <text x="334.500" y="443" textLength="43" lengthAdjust="spacingAndGlyphs">2,37</text>
              </g>
              <g class="note">
                <text x="567" y="586.500" textLength="15" lengthAdjust="spacingAndGlyphs">?</text>
                <text v-for="(n, i) in notes" :key="i" :x="n.x" :y="n.y" :textLength="n.w" lengthAdjust="spacingAndGlyphs">{{ n.t }}</text>
              </g>
              <g fill="#ff1616">
                <path d="M527 221.500H632.500L631.500 440H527zM413 492H631.500V598H413z" opacity=".52" />
                <path d="M325 327H388V509H325zM435 221.500H581V281H435z" opacity=".45" />
              </g>
            </g>
          </svg>
          <div class="vscroll"><i class="up"></i><b></b><i class="dn"></i></div>
        </div>
        <div class="status">
          <span class="pct">50%</span>
          <div class="info">
            <svg width="14" height="12"><path d="M5 2.500H1.500v9h9V9" fill="none" stroke="#ccc" /><path d="M3 9q0-5 6-5V1.500L13.500 5 9 8.500V6Q5 6 3 9z" fill="#ccc" /></svg>
            <span>Doc: 5,93M/50,5M</span><i></i>
          </div>
          <div class="hscroll"><i class="lf"></i><b></b><i class="rg"></i></div>
        </div>
      </section>

      <aside class="dock">
        <div class="strip r"><svg width="10" height="6"><path d="M4 0L0.500 3 4 6zM8.500 0L5 3 8.500 6z" fill="#c8c8c8" /></svg></div>
        <div v-for="(g, i) in dock" :key="i" class="dgrp">
          <i class="hgrip"></i>
          <svg v-for="(s, j) in g" :key="j" width="22" height="22" v-html="s"></svg>
        </div>
        <div class="drest"></div>
      </aside>

      <aside class="panels">
        <div class="strip r p"><svg width="10" height="6"><path d="M0 0l3.500 3L0 6zM4.500 0L8 3 4.500 6z" fill="#c8c8c8" /></svg></div>
        <section class="panel p1">
          <div class="ptabs"><span class="on w31">Cor</span><span class="w58">Amostras</span><i class="pm"></i></div>
          <div class="color">
            <svg width="34" height="34"><path d="M.5.500h20v20H.5z" fill="#999" stroke="#999" /><path d="M11.500 11.500h18v18h-18z" fill="#222" /><path d="M12.500 12.500h16v16h-16z" fill="#f91616" stroke="#fff" /><path d="M1.500 1.500h18v18h-18z" fill="#eee" stroke="#222" /><path d="M2.500 2.500h16v16h-16z" fill="#f0f0f0" stroke="#fff" /></svg>
            <div class="sv"><i></i></div>
            <svg class="knob" width="8" height="8"><path d="M1 .5l4 1.500 2 2-2 2-4 1.500z" fill="#eee" /></svg>
            <div class="hue"></div>
            <div class="grab"></div>
          </div>
        </section>
        <section class="panel p2">
          <div class="ptabs"><span class="w65">Bibliotecas</span><span class="on w49">Ajustes</span><span class="w44">Estilos</span><i class="pm"></i></div>
          <h4>Adicionar um ajuste</h4>
          <div v-for="(r, i) in adjRows" :key="i" class="arow" :class="{ wide: i === 1 }">
            <svg v-for="k in r" :key="k" width="18" height="18" v-html="ico[k]"></svg>
          </div>
        </section>
        <section class="panel p3">
          <div class="ptabs"><span class="on w55">Camadas</span><span class="w44">Canais</span><span class="w81">Demarcadores</span><i class="pm"></i></div>
          <div class="lrow r1">
            <div class="select tipo"><svg width="12" height="12"><circle cx="7" cy="4.500" r="3.500" fill="none" stroke="#ddd" stroke-width="1.400" /><path d="M4.500 7L1 11" stroke="#ddd" stroke-width="1.800" /></svg><span>Tipo</span><i class="updn"></i></div>
            <div class="fil"><svg v-for="k in filters" :key="k" width="18" height="18" v-html="ico[k]"></svg></div>
            <i class="toggle"></i>
          </div>
          <div class="lrow r2">
            <div class="select norm"><span>Normal</span><i class="updn"></i></div>
            <label>Opacidade:</label><div class="num"><b>45%</b><i></i></div>
          </div>
          <div class="lrow r3">
            <label class="bl">Bloq.:</label>
            <div class="locks"><svg v-for="k in locks" :key="k" width="18" height="18" v-html="ico[k]"></svg></div>
            <label>Preen.:</label><div class="num"><b>100%</b><i></i></div>
          </div>
          <div class="list">
            <div class="rows">
              <div v-for="l in layers" :key="l.name" class="layer" :class="{ on: l.active }">
                <div class="eye"><svg width="14" height="10"><path d="M0 5.500Q6.500-2 13 5.500 6.500 11.500 0 5.500z" fill="#ccc" /><circle cx="6.500" cy="5" r="3" fill="#444" /><circle cx="6" cy="4.500" r="1" fill="#ddd" /></svg></div>
                <svg class="th" width="38" height="25" viewBox="0 0 38 25">
                  <template v-if="l.kind === 'shape'">
                    <path v-if="l.active" d="M1.500 7V1.500H12M26 1.500h10.500V7M36.500 17v6.500H26M12 23.500H1.500V17" fill="none" stroke="#e8eef5" />
                    <path d="M3 3h32v6H22v13H3z" fill="#111" /><path d="M4 4h30v4H21v12.500H4z" fill="#fff" />
                    <path d="M8 4h4v4H8zM16 4h4v4h-4zM24 4h4v4h-4zM4 8h4v4H4zM12 8h4v4h-4zM8 12h4v4H8zM16 12h4v4h-4zM4 16h4v4H4zM12 16h4v4h-4z" fill="#ccc" />
                    <rect v-if="l.rect" :x="l.rect[0] + 3" :y="l.rect[1] + 2" :width="l.rect[2]" :height="l.rect[3]" fill="#f91616" />
                    <rect x="24" y="11" width="9" height="9" fill="none" stroke="#ddd" /><path d="M23 10h2v2h-2zM32 10h2v2h-2zM23 19h2v2h-2zM32 19h2v2h-2z" fill="#555" stroke="#ddd" />
                  </template>
                  <text v-else x="18" y="17" text-anchor="middle" font-family="Liberation Serif, serif" font-size="17" fill="#d5d5d5" stroke="#d5d5d5" stroke-width=".4">T</text>
                </svg>
                <span>{{ l.name }}</span>
              </div>
            </div>
            <div class="lscroll"><i class="up"></i><b></b><i class="dn"></i></div>
          </div>
          <div class="pfoot"><svg v-for="k in footer" :key="k" width="18" height="18" v-html="ico[k]"></svg></div>
        </section>
      </aside>
    </main>

    <footer class="taskbar">
      <div v-for="(s, i) in sys" :key="'s' + i" class="sys"><svg width="18" height="18" v-html="s"></svg></div>
      <div v-for="(a, i) in apps" :key="i" class="tapp" :class="{ on: a.on, active: a.active }"><svg width="18" height="18" v-html="a.g"></svg></div>
      <div class="tray">
        <span class="pt">PT</span>
        <svg v-for="(t, i) in tray" :key="i" width="18" height="18" v-html="t"></svg>
        <span class="clock">08:44</span>
        <svg class="act" width="18" height="18"><path d="M1.500 2.500h15v11h-5L9 16l-2.500-2.500h-5z" fill="none" stroke="#fff" stroke-width="1.200" /></svg>
        <i></i>
      </div>
    </footer>
  </div>
</template>

<style>
html, body { margin: 0; background: #282828; overflow: hidden; }
</style>

<style scoped>
.app { width: 1366px; height: 768px; display: grid; grid-template-rows: 29px 34px 675px 30px; background: #2b2b2b; color: #eee; font: 10.5px/14px "DejaVu Sans Condensed", "Open Sans", sans-serif; overflow: hidden; letter-spacing: -0.2px; }
.app * { box-sizing: border-box; }
svg { display: block; flex: none; }
i { display: block; flex: none; font-style: normal; }
.menubar { display: flex; background: #535353; border-bottom: 1px solid #2b2b2b; }
.logo { width: 47px; padding-left: 7px; font: 700 20px/26px "Open Sans", sans-serif; color: #7aa7d8; letter-spacing: -0.5px; }
.menus { display: flex; font: 12px/28px "Open Sans", "Noto Sans", sans-serif; color: #f2f2f2; letter-spacing: -0.2px; }
.win { margin: 0 3px 0 auto; display: flex; height: 19px; background: linear-gradient(#747474, #5a5a5a); border: 1px solid #2b2b2b; border-top: 0; border-radius: 0 0 3px 3px; }
.win span + span { border-left: 1px solid #2b2b2b; }
.options { display: flex; align-items: center; background: #535353; border-top: 1px solid #686868; border-bottom: 1px solid #2b2b2b; border-left: 1px solid #2b2b2b; padding: 0 6px 2px 0; }
.vgrip { width: 3px; height: 20px; margin: 0 0 0 4px; background: repeating-linear-gradient(#2b2b2b 0 1px, transparent 1px 2px); }
.mv { margin: 0 0 2px 15px; }
.caret { margin-left: 5px; border: 3px solid transparent; border-top: 4px solid #ddd; border-bottom: 0; }
.sep { width: 1px; height: 23px; background: #383838; }
.s1 { margin: 0 7px 0 6px; }
.s2 { margin: 0 9px; }
.s3 { margin-right: 8px; }
.check { width: 14px; height: 14px; border: 1px solid #333; border-radius: 2px; background: linear-gradient(#636363, #707070); }
.ol { white-space: nowrap; margin-left: 5px; padding-bottom: 1px; }
.sel { width: 68px; letter-spacing: -0.3px; }
.most { width: 112px; margin-left: 4px; letter-spacing: 0; }
.modo { width: 59px; margin-left: 9px; color: #aaa; letter-spacing: -0.5px; padding: 0; }
.select { display: flex; align-items: center; height: 18px; border: 1px solid #333; border-radius: 3px; background: linear-gradient(#787878, #636363); box-shadow: 0 1px 0 #666; padding: 0 4px 0 7px; }
.agr { width: 67px; }
.ess { width: 148px; margin-left: auto; }
.updn { margin-left: auto; width: 6px; height: 9px; background: #e8e8e8; clip-path: polygon(50% 0, 100% 42%, 0 42%, 0 58%, 100% 58%, 50% 100%, 0 58%, 0 42%); }
.grp { display: flex; gap: 8px; padding: 0 4px; margin-right: 8px; }
.sep + .grp { margin-left: 8px; }
.s3 + .grp { margin-left: 0; }
.m3 { margin: 0 0 0 1px; padding: 0; }
.main { display: flex; background: #2b2b2b; min-height: 0; }
.strip { height: 11px; background: #3b3b3b; margin-bottom: 1px; padding: 3px 4px; display: flex; flex: none; }
.strip.r { justify-content: flex-end; }
.toolcol { width: 37px; margin: 0 3px 0 1px; display: flex; flex-direction: column; }
.tools { flex: 1; background: #535353; border-top: 1px solid #686868; display: flex; flex-direction: column; }
.hgrip { width: 19px; height: 4px; margin: 3px auto 0; background: repeating-linear-gradient(90deg, #2b2b2b 0 1px, transparent 1px 2px); }
.tools .hgrip { margin: 3px 0 0 9px; }
.tgrp { padding: 0 3px; }
.tgrp:nth-of-type(1) { padding-top: 7px; }
.tgrp + .tgrp { margin-top: 1px; padding-top: 2px; border-top: 1px solid #333; }
.tgrp:nth-of-type(2) { padding-top: 1px; }
.tgrp:nth-of-type(3) { padding-top: 0; }
.tool { display: flex; width: 31px; height: 26px; padding: 1px 3px; align-items: flex-end; }
.tool.on { background: #3a3a3a; border: 1px solid #272727; border-radius: 3px; padding: 0 2px; height: 24px; margin: 1px 0; }
.corner { margin-left: -1px; border-left: 3px solid transparent; border-bottom: 3px solid #aaa; }
.swatches { margin-top: -1px; }
.doc { width: 973px; flex: none; display: flex; flex-direction: column; }
.tabs { height: 20px; background: #3a3a3a; border-bottom: 1px solid #2b2b2b; display: flex; }
.tab { width: 237px; background: #535353; border-top: 1px solid #686868; display: flex; justify-content: space-between; padding: 0 6px 0 9px; color: #eee; font: 600 11px/17px "Open Sans", sans-serif; white-space: nowrap; letter-spacing: -0.03px; }
.tab b { font-weight: 700; font-size: 14px; }
.stage { display: grid; grid-template: 17px 621px / 17px 939px 17px; }
.rt { font: 10.5px "DejaVu Sans Condensed", sans-serif; fill: #a2a2a2; letter-spacing: -0.2px; }
.vscroll { grid-column: 3; grid-row: 1 / 3; background: linear-gradient(90deg, #363636, #464646); display: flex; flex-direction: column; align-items: center; }
.up { border: 3px solid transparent; border-top: 0; border-bottom: 3px solid #ddd; }
.dn { border: 3px solid transparent; border-bottom: 0; border-top: 3px solid #ddd; }
.vscroll .up { margin-top: 6px; }
.vscroll b { width: 12px; height: 234px; margin-top: 193px; border-radius: 3px; background: linear-gradient(90deg, #858585, #6a6a6a); }
.vscroll .dn { margin-top: 193px; }
.plan { font-family: "Lato", sans-serif; fill: #333; stroke: #333; stroke-width: 0.5px; letter-spacing: 0; }
.street { word-spacing: 7px; }
.note { font: 900 26px Lato, sans-serif; fill: #000; stroke: #000; stroke-width: 0.4px; letter-spacing: 0.3px; word-spacing: 4px; }
.small { font-size: 19.5px; stroke-width: 0.3px; }
.status { height: 16px; display: flex; background: #3b3b3b; }
.pct { width: 48px; padding-left: 14px; }
.info { width: 202px; background: #4b4b4b; display: flex; align-items: center; padding: 0 3px; }
.info span { margin-left: 48px; letter-spacing: -0.4px; white-space: nowrap; }
.info i { margin-left: auto; border: 5px solid transparent; border-left: 6px solid #eee; border-right: 0; }
.hscroll { flex: 1; display: flex; align-items: center; background: linear-gradient(#383838, #464646); }
.lf { margin-left: 6px; border: 3px solid transparent; border-right: 3px solid #ddd; border-left: 0; }
.rg { margin-left: 221px; border: 3px solid transparent; border-left: 3px solid #ddd; border-right: 0; }
.hscroll b { margin-left: 231px; width: 235px; height: 12px; border-radius: 3px; background: linear-gradient(#8a8a8a, #6c6c6c); }
.dock { width: 38px; margin: 0 2px; display: flex; flex-direction: column; }
.dgrp { height: 40px; flex: none; background: #535353; border-top: 1px solid #686868; margin-bottom: 1px; display: flex; flex-direction: column; gap: 5px; align-items: center; }
.dgrp svg { overflow: visible; }
.dgrp .hgrip + svg { margin-top: 1px; }
.dgrp:nth-of-type(5) { height: 68px; margin: 0; }
.drest { flex: 1; background: #535353; margin-bottom: 1px; }
.panels { width: 309px; display: flex; flex-direction: column; }
.panel { background: #535353; display: flex; flex-direction: column; flex: none; }
.p1 { height: 269px; margin-bottom: 2px; }
.p2 { height: 120px; margin-bottom: 2px; }
.p3 { height: 270px; }
.ptabs { display: flex; height: 17px; background: #3b3b3b; flex: none; color: #999; font: 600 10.5px/16px "Open Sans", sans-serif; letter-spacing: -0.3px; border-top: 1px solid #4a4a4a; }
.ptabs span { text-align: center; border-right: 1px solid #2b2b2b; border-bottom: 1px solid #2b2b2b; height: 17px; }
.ptabs span.on { background: #535353; color: #eee; border-bottom-color: #535353; }
.pm { display: flex; margin: 4px 3px 0 auto; width: 15px; height: 8px; background: repeating-linear-gradient(#ccc 0 1px, transparent 1px 2px) 6px 0 / 9px 8px no-repeat; }
.pm::before { content: ""; display: block; width: 5px; height: 3px; margin-top: 2px; background: #bbb; clip-path: polygon(0 0, 100% 0, 50% 100%); }
.w31 { width: 32px; } .w58 { width: 58px; } .w65 { width: 66px; } .w49 { width: 49px; } .w44 { width: 44px; } .w55 { width: 56px; } .w81 { width: 81px; }
.color { display: flex; padding: 5px 0 0 9px; flex: 1; border-top: 1px solid #5c5c5c; }
.color > svg { margin-top: 3px; }
.sv { width: 214px; height: 240px; border: 1px solid #3a3a3a; margin-left: 1px; overflow: hidden; background: linear-gradient(transparent, #000), linear-gradient(90deg, #fff, #f00); }
.sv i { width: 13px; height: 13px; border: 1.5px solid #444; border-radius: 50%; margin: 9px 0 0 -6px; }
.color > .knob { margin: 235px 0 0 6px; }
.hue { width: 21px; height: 240px; border: 1px solid #3a3a3a; margin-left: 1px; background: linear-gradient(red, #f0f, #00f, #0ff, #0f0, #ff0, red); }
.grab { width: 10px; height: 10px; margin: 236px 0 0 4px; background: radial-gradient(circle, #222 0.8px, transparent 1px) 0 0 / 3px 3px; clip-path: polygon(100% 0, 100% 100%, 0 100%); }
h4 { margin: 3px 0 0 9px; font: 600 11px/16px "Open Sans", sans-serif; color: #fff; letter-spacing: -0.35px; }
.arow { display: flex; gap: 6.300px; padding-left: 45px; height: 27px; align-items: center; flex: none; }
.p2 h4 + .arow { margin-top: -1px; }
.arow.wide { padding-left: 34px; gap: 6px; }
.p2 h4 ~ .arow.wide, .p2 .arow.wide + .arow { margin-top: -0.5px; }
.lrow { display: flex; align-items: center; padding: 0 4px; flex: none; }
.r1 { height: 28px; border-top: 1px solid #686868; border-bottom: 1px solid #3a3a3a; padding-bottom: 1px; }
.r2 { height: 28px; border-top: 1px solid #686868; border-bottom: 1px solid #3a3a3a; padding-bottom: 1px; }
.r3 { height: 30px; border-top: 1px solid #686868; border-bottom: 1px solid #333; padding-bottom: 2px; }
.tipo { width: 111px; gap: 4px; }
.norm { width: 185px; }
.fil { display: flex; gap: 6px; margin-left: 32px; }
.toggle { margin-left: auto; width: 10px; height: 17px; border: 1px solid #2d2d2d; background: linear-gradient(#888 45%, #333 50%); }
.lrow label { margin-left: auto; margin-right: 5px; letter-spacing: -0.4px; }
.lrow .bl { margin: 0 5px 0 2px; width: 26px; }
.locks { display: flex; gap: 4.300px; }
.num { display: flex; width: 55px; height: 19px; border: 1px solid #2d2d2d; border-radius: 2px; background: #3a3a3a; }
.num b { font-weight: 400; width: 33px; line-height: 17px; text-align: center; letter-spacing: -0.5px; }
.num i { width: 20px; background: linear-gradient(#747474, #626262); border-left: 1px solid #2d2d2d; }
.num i::after { content: ""; display: block; margin: 7px 0 0 6px; width: 0; border: 3px solid transparent; border-top: 4px solid #ddd; border-bottom: 0; }
.list { display: flex; height: 147px; overflow: hidden; flex: none; }
.rows { width: 294px; height: 147px; overflow: hidden; }
.layer { display: flex; height: 26px; border-bottom: 1px solid #3a3a3a; align-items: center; }
.layer.on { background: linear-gradient(90deg, #535353 30px, #6c7d94 30px); }
.eye { width: 31px; height: 25px; border-right: 1px solid #3a3a3a; padding: 7px 0 0 9px; flex: none; }
.layer span { margin-left: 7px; padding-top: 2px; }
.lscroll { width: 15px; background: linear-gradient(90deg, #363636, #464646); border-left: 1px solid #333; display: flex; flex-direction: column; align-items: center; }
.lscroll .up { margin-top: 6px; }
.lscroll b { width: 12px; height: 41px; margin-top: 9px; border-radius: 3px; background: linear-gradient(90deg, #858585, #6a6a6a); }
.lscroll .dn { margin-top: 78px; }
.pfoot { flex: 1; border-top: 1px solid #686868; box-shadow: 0 -1px 0 #333; display: flex; align-items: center; gap: 9px; padding-left: 104px; }
.taskbar { display: flex; background: #101010; align-items: stretch; }
.sys { width: 36px; padding: 6px 9px; }
.sys:nth-child(4) { margin-right: 2.500px; }
.tapp { width: 37px; display: flex; flex-direction: column; align-items: center; padding-top: 6px; }
.tapp.active { width: 36px; margin-right: 1px; background: #333; }
.tapp.on::after { content: ""; width: 28px; height: 2px; margin-top: 4px; background: #76b9ed; }
.tapp.active::after { width: 36px; }
.tray { margin-left: auto; display: flex; align-items: center; gap: 6px; font: 12px/28px "Open Sans", sans-serif; letter-spacing: -0.4px; color: #fff; }
.pt { width: 20px; padding-bottom: 3px; font-size: 12px; }
.clock { width: 34px; margin-left: 3px; letter-spacing: -0.75px; }
.act { margin-left: 4px; }
.tray i { width: 1px; height: 28px; background: #666; margin: 0 4px 0 13px; }
</style>
